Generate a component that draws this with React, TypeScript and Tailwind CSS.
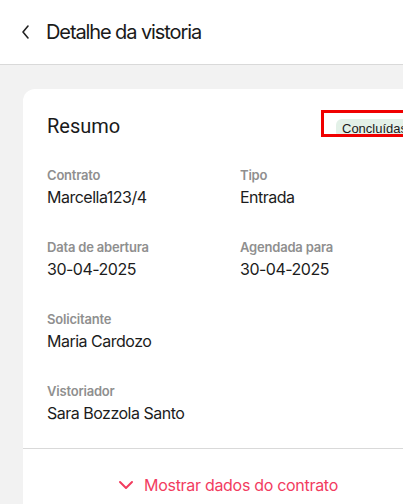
import React from "react";

const font = { fontFamily: "Inter, 'Noto Sans', sans-serif" };

function Field({ label, value }: { label: string; value: string }) {
  return (
    <div className="flex flex-col gap-[1px]">
      <span className="text-[13px] leading-[18px] font-semibold text-[#8f8f8f] tracking-[-0.2px]">{label}</span>
      <span className="text-[16px] leading-[24px] text-[#1c1c1c] tracking-[-0.5px]">{value}</span>
    </div>
  );
}

export default function App() {
  return (
    <div className="w-[403px] h-[504px] overflow-hidden bg-[#f2f2f2]" style={font}>
      <header className="h-[65px] bg-white border-b border-[#d9d9d9] flex items-center pl-[20px] gap-[14px]">
        <svg width="12" height="16" viewBox="0 0 12 16" fill="none" stroke="#222" strokeWidth="1.6" strokeLinecap="round" strokeLinejoin="round">
          <path d="M8 2 L3 8 L8 14" />
        </svg>
        <h1 className="text-[20px] leading-[28px] text-[#1a1a1a] tracking-[-1.1px] font-normal">Detalhe da vistoria</h1>
      </header>
      <div className="pt-[24px] pl-[23px]">
        <div className="w-[410px] bg-white rounded-[12px]">
          <div className="px-[24px] pt-[21px]">
            <div className="flex items-center justify-between h-[27px]">
              <span className="text-[20px] leading-[28px] text-[#1a1a1a] mt-[4px]" style={{ fontFamily: "Roboto, sans-serif" }}>Resumo</span>
              <div className="w-[88px] h-[27px] border-[3px] border-[#f00000] pl-[12px] pt-[2px] overflow-hidden flex-shrink-0">
                <div className="inline-flex items-center h-[19px] bg-[#e3f1e8] rounded-[6px] px-[6px] text-[13px] text-[#1a1a1a] whitespace-nowrap" style={{ fontFamily: "'Liberation Sans', Arial, sans-serif" }}>
                  Concluídas
                </div>
              </div>
            </div>
            <div className="grid grid-cols-[193px_1fr] gap-y-[29px] mt-[29px] pb-[23px]">
              <Field label="Contrato" value="Marcella123/4" />
              <Field label="Tipo" value="Entrada" />
              <Field label="Data de abertura" value="30-04-2025" />
              <Field label="Agendada para" value="30-04-2025" />
              <div className="col-span-2"><Field label="Solicitante" value="Maria Cardozo" /></div>
              <div className="col-span-2"><Field label="Vistoriador" value="Sara Bozzola Santo" /></div>
            </div>
          </div>
          <div className="border-t border-[#d9d9d9] flex items-center justify-center gap-[10px] pt-[24px] pb-[25px]">
            <svg width="16" height="10" viewBox="0 0 16 10" fill="none" stroke="#f23c5f" strokeWidth="2" strokeLinecap="round" strokeLinejoin="round">
              <path d="M2 2 L8 8 L14 2" />
            </svg>
            <span className="text-[16px] leading-[24px] text-[#f23c5f] tracking-[-0.3px]">Mostrar dados do contrato</span>
          </div>
        </div>
      </div>
    </div>
  );
}
